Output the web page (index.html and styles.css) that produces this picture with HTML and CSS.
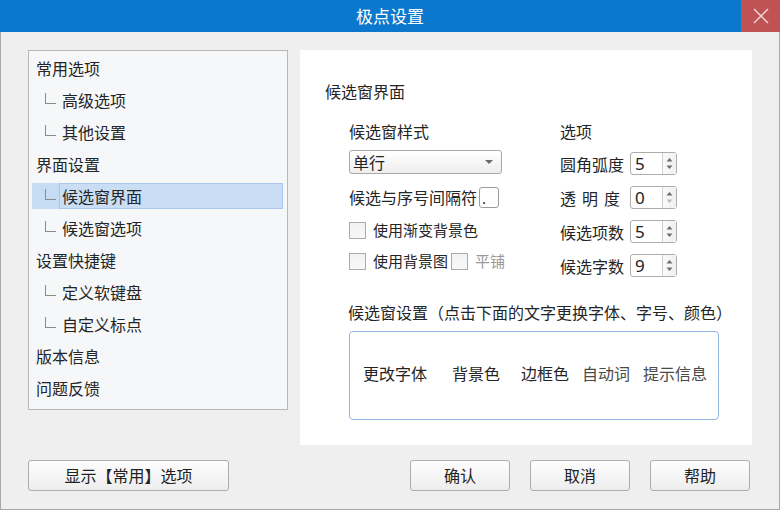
FILE: index.html
```html
<!DOCTYPE html>
<html lang="zh-CN">
<head>
<meta charset="utf-8">
<title>极点设置</title>
<link rel="stylesheet" href="styles.css">
</head>
<body>
<div class="window">
  <div class="titlebar">
    <div class="title">极点设置</div>
    <div class="close">
      <svg width="16" height="16" viewBox="0 0 16 16"><path d="M1 1 L15 15 M15 1 L1 15" stroke="#f3dada" stroke-width="1.4" fill="none"/></svg>
    </div>
  </div>
  <div class="body">
    <div class="main">
      <div class="tree">
        <div class="row"><div class="item"><span class="label top">常用选项</span></div></div>
        <div class="row"><div class="item"><span class="branch"></span><span class="label">高级选项</span></div></div>
        <div class="row"><div class="item"><span class="branch"></span><span class="label">其他设置</span></div></div>
        <div class="row"><div class="item"><span class="label top">界面设置</span></div></div>
        <div class="row"><div class="item selected"><span class="branch"></span><span class="label focus">候选窗界面</span></div></div>
        <div class="row"><div class="item"><span class="branch"></span><span class="label">候选窗选项</span></div></div>
        <div class="row"><div class="item"><span class="label top">设置快捷键</span></div></div>
        <div class="row"><div class="item"><span class="branch"></span><span class="label">定义软键盘</span></div></div>
        <div class="row"><div class="item"><span class="branch"></span><span class="label">自定义标点</span></div></div>
        <div class="row"><div class="item"><span class="label top">版本信息</span></div></div>
        <div class="row"><div class="item"><span class="label top">问题反馈</span></div></div>
      </div>
      <div class="panel">
        <div class="panel-title">候选窗界面</div>
        <div class="cols">
          <div class="col-left">
            <div class="lbl">候选窗样式</div>
            <div class="select"><span>单行</span><span class="arrow"></span></div>
            <div class="sep-row"><span>候选与序号间隔符</span><span class="sep-box">.</span></div>
            <div class="check-row first"><span class="check"></span><span class="check-text">使用渐变背景色</span></div>
            <div class="check-row second"><span class="check"></span><span class="check-text">使用背景图</span><span class="check check2"></span><span class="check-text muted">平铺</span></div>
          </div>
          <div class="col-right">
            <div class="lbl">选项</div>
            <div class="spin-row"><span class="spin-label">圆角弧度</span><span class="spin"><span class="val">5</span><span class="btns"><svg width="13" height="21" viewBox="0 0 13 21"><path d="M3.5 8.5 L6.5 5 L9.5 8.5 Z" fill="#6d6d6d"/><path d="M3.5 12.5 L6.5 16 L9.5 12.5 Z" fill="#6d6d6d"/></svg></span></span></div>
            <div class="spin-row"><span class="spin-label">透 明 度</span><span class="spin"><span class="val">0</span><span class="btns"><svg width="13" height="21" viewBox="0 0 13 21"><path d="M3.5 8.5 L6.5 5 L9.5 8.5 Z" fill="#6d6d6d"/><path d="M3.5 12.5 L6.5 16 L9.5 12.5 Z" fill="#bdbdbd"/></svg></span></span></div>
            <div class="spin-row"><span class="spin-label">候选项数</span><span class="spin"><span class="val">5</span><span class="btns"><svg width="13" height="21" viewBox="0 0 13 21"><path d="M3.5 8.5 L6.5 5 L9.5 8.5 Z" fill="#6d6d6d"/><path d="M3.5 12.5 L6.5 16 L9.5 12.5 Z" fill="#6d6d6d"/></svg></span></span></div>
            <div class="spin-row"><span class="spin-label">候选字数</span><span class="spin"><span class="val">9</span><span class="btns"><svg width="13" height="21" viewBox="0 0 13 21"><path d="M3.5 8.5 L6.5 5 L9.5 8.5 Z" fill="#6d6d6d"/><path d="M3.5 12.5 L6.5 16 L9.5 12.5 Z" fill="#6d6d6d"/></svg></span></span></div>
          </div>
        </div>
        <div class="preview-label">候选窗设置（点击下面的文字更换字体、字号、颜色）</div>
        <div class="preview">
          <span>更改字体</span>
          <span>背景色</span>
          <span>边框色</span>
          <span class="soft">自动词</span>
          <span class="soft">提示信息</span>
        </div>
      </div>
    </div>
    <div class="footer">
      <button class="btn wide">显示【常用】选项</button>
      <div class="btn-group">
        <button class="btn">确认</button>
        <button class="btn">取消</button>
        <button class="btn">帮助</button>
      </div>
    </div>
  </div>
</div>
</body>
</html>
```
FILE: styles.css
```css
* { box-sizing: border-box; }
html, body { margin: 0; padding: 0; }
body {
  width: 780px;
  height: 510px;
  overflow: hidden;
  font-family: "Noto Sans CJK SC", "Noto Sans", sans-serif;
  font-size: 16px;
  color: #252525;
  background: #efefef;
}
.window {
  width: 780px;
  height: 510px;
  display: flex;
  flex-direction: column;
}
.titlebar {
  height: 32px;
  background: #0b78cd;
  display: flex;
  padding-left: 39px;
}
.title {
  flex: 1;
  text-align: center;
  color: #fff;
  font-size: 17px;
  line-height: 32px;
}
.close {
  width: 39px;
  height: 32px;
  background: #bf5252;
  display: flex;
  align-items: center;
  justify-content: center;
}
.body {
  flex: 1;
  background: #efefef;
  border: 1px solid #a8a8a8;
  border-top: none;
  display: flex;
  flex-direction: column;
}
.main {
  display: flex;
  align-items: flex-start;
  gap: 12px;
  padding: 18px 0 0 27px;
}
.tree {
  width: 260px;
  height: 360px;
  background: #f5f7f9;
  border: 1px solid #b8b8b8;
  padding-top: 1px;
}
.row {
  height: 32px;
  padding: 3px 4px 3px 3px;
}
.item {
  height: 26px;
  display: flex;
  align-items: center;
}
.item.selected { background: #c6dcf3; }
.branch {
  width: 11px;
  height: 11px;
  margin-left: 13px;
  margin-right: 3px;
  margin-bottom: 3px;
  border-left: 1px solid #8a8a8a;
  border-bottom: 1px solid #8a8a8a;
}
.label {
  flex: 1;
  height: 26px;
  line-height: 24px;
  border: 1px solid transparent;
  padding-left: 2px;
  white-space: nowrap;
}
.label.top { padding-left: 3px; }
.label.focus {
  border-color: #a9c7ea;
  background: #c9def5;
}
.panel {
  width: 452px;
  height: 395px;
  background: #fff;
  padding: 30px 0 0 25px;
}
.panel-title {
  line-height: 22px;
  height: 22px;
}
.cols {
  display: flex;
  margin: 18px 0 0 24px;
}
.col-left { width: 211px; }
.lbl { line-height: 22px; height: 22px; }
.select {
  margin-top: 8px;
  width: 153px;
  height: 24px;
  border: 1px solid #a9a9a9;
  border-radius: 3px;
  background: linear-gradient(#ffffff, #eeeeee);
  display: flex;
  align-items: center;
  justify-content: space-between;
  padding: 0 8px 0 3px;
  line-height: 22px;
}
.arrow {
  width: 0;
  height: 0;
  border-left: 4px solid transparent;
  border-right: 4px solid transparent;
  border-top: 4px solid #6a6a6a;
}
.sep-row {
  margin-top: 12px;
  height: 22px;
  display: flex;
  align-items: center;
  line-height: 22px;
}
.sep-box {
  width: 20px;
  height: 21px;
  margin-left: 2px;
  border: 1px solid #9c9c9c;
  border-radius: 3px;
  background: #fff;
  font-family: "Noto Sans", sans-serif;
  font-size: 15px;
  line-height: 20px;
  padding-left: 2px;
}
.check-row {
  height: 22px;
  display: flex;
  align-items: center;
  font-size: 15px;
  line-height: 22px;
}
.check-row.first { margin-top: 11px; }
.check-row.second { margin-top: 9px; }
.check {
  width: 17px;
  height: 17px;
  border: 1px solid #ababab;
  background: linear-gradient(#f2f2f2, #f8f8f8);
  margin-right: 7px;
  flex: none;
}
.check2 { margin-left: 3px; }
.check-text { white-space: nowrap; }
.muted { color: #9a9a9a; }
.spin-row {
  margin-top: 11px;
  height: 23px;
  display: flex;
  align-items: center;
}
.lbl + .spin-row { margin-top: 10px; }
.spin-label {
  width: 60px;
  margin-right: 10px;
  text-align: justify;
  text-align-last: justify;
  line-height: 22px;
  white-space: nowrap;
}
.spin {
  width: 47px;
  height: 23px;
  border: 1px solid #adadad;
  border-radius: 3px;
  background: #fff;
  display: flex;
}
.val {
  flex: 1;
  font-family: "Noto Sans", sans-serif;
  font-size: 17px;
  line-height: 21px;
  padding-left: 4px;
  color: #222;
}
.btns {
  width: 14px;
  border-left: 1px solid #d0d0d0;
  background: linear-gradient(90deg, #fafafa, #f0f0f0);
  display: flex;
}
.preview-label {
  margin: 24px 0 0 23px;
  line-height: 22px;
  height: 22px;
  white-space: nowrap;
}
.preview {
  margin: 8px 0 0 24px;
  width: 370px;
  height: 89px;
  border: 1px solid #93b8e3;
  border-radius: 4px;
  display: grid;
  grid-template-columns: 89px 69px 61px 61px auto;
  align-items: center;
  padding: 0 0 5px 13px;
  white-space: nowrap;
}
.preview .soft { color: #4a4a4a; }
.footer {
  margin-top: 15px;
  display: flex;
  justify-content: space-between;
  padding: 0 29px 0 27px;
}
.btn-group {
  display: flex;
  gap: 20px;
}
.btn {
  width: 100px;
  height: 31px;
  border: 1px solid #acacac;
  border-radius: 3px;
  background: linear-gradient(#fdfdfd, #ededed);
  font-family: "Noto Sans CJK SC", sans-serif;
  font-size: 16px;
  color: #222;
  padding: 0;
  line-height: 29px;
}
.btn.wide { width: 201px; }
```
